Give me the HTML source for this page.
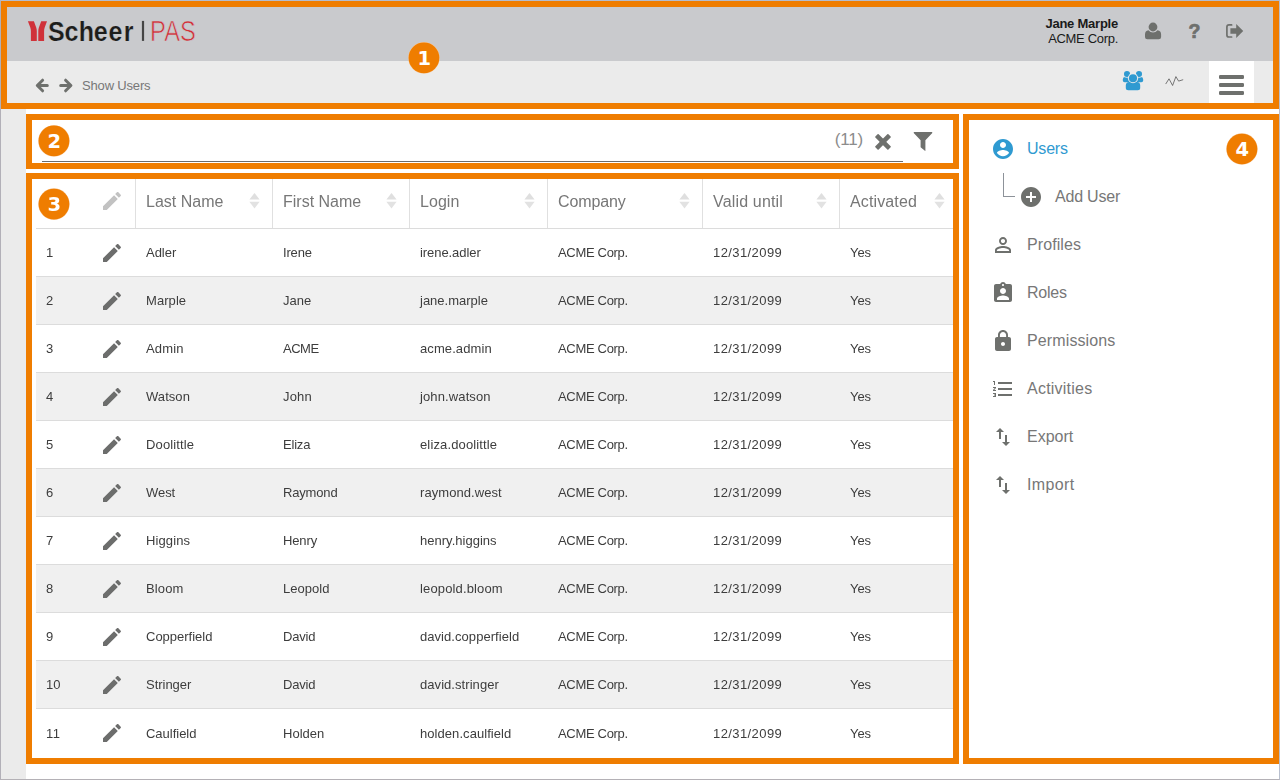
<!DOCTYPE html>
<html lang="en"><head><meta charset="utf-8"><title>Show Users</title>
<style>
html,body{margin:0;padding:0}
body{width:1280px;height:780px;position:relative;overflow:hidden;background:#fff;font-family:"Liberation Sans",sans-serif;color:#444;font-size:13px}
.abs,.abs>*{position:absolute}
.frame{position:absolute;left:0;top:0;width:1278px;height:778px;border:1px solid;border-color:#b5bccc #b8bfce #b4b1b6 #b2b0b8;z-index:50;pointer-events:none}
.topbar{position:absolute;left:1px;top:1px;width:1278px;height:60px;background:#c9cacd}
.navbar{position:absolute;left:1px;top:61px;width:1278px;height:48px;background:#ebebeb}
.gutter{position:absolute;left:1px;top:109px;width:25px;height:670px;background:#ebebeb}
.hl{position:absolute;border:6px solid #ef7d00;box-sizing:border-box;z-index:20;pointer-events:none}
.badge{position:absolute;z-index:30}
.user{position:absolute;right:162px;top:16px;text-align:right;color:#1a1a1a;font-size:13px;line-height:15px;white-space:nowrap}
.user b{display:block;font-weight:700}
.crumb{position:absolute;left:82px;top:77px;font-size:13px;line-height:18px;color:#777;white-space:nowrap}
.menubtn{position:absolute;left:1209px;top:61px;width:45px;height:48px;background:#fff}
.search{position:absolute;left:42px;top:161px;width:861px;height:1px;background:#6b6b6b}
.count{position:absolute;right:417px;top:130px;font-size:17px;line-height:20px;color:#8c8c8c;white-space:nowrap}
.tbl{position:absolute;left:36px;top:179px;width:917px;will-change:transform}
.thead,.tr{display:flex;box-sizing:border-box;width:917px;white-space:nowrap}
.thead{height:50px;border-bottom:1px solid #dcdcdc;font-size:16px;line-height:45px;color:#777}
.tr{height:48px;border-bottom:1px solid #dcdcdc;line-height:47px;color:#3d3d3d}
.tr:nth-child(even){background:#f0f0f0}
.tr:last-child{border-bottom:0;height:49px;line-height:49px}
.c0{width:99px;position:relative;box-sizing:border-box;padding-left:10px}
.c0 svg{position:absolute;left:63.5px}
.tr .c0 svg{top:12px}
.thead .c0 svg{top:10px}
.c{box-sizing:border-box;padding-left:11px;position:relative}
.thead .c{border-left:1px solid #e0e0e0;padding-left:10px}
.w1{width:137px}.w2{width:137px}.w3{width:138px}.w4{width:155px}.w5{width:137px}.w6{width:113px}
.sort{position:absolute;top:14px;right:12px;width:11px;height:16px}
.w6 .sort{right:7px}
.side{position:absolute;left:969px;top:120px;width:304px;height:638px;background:#fff}
.mi{position:absolute;left:57px;font-size:16px;line-height:24px;color:#777;white-space:nowrap}
.mi.on{color:#2f9ad1}
.ic{position:absolute;left:22px;width:24px;height:24px}
</style></head>
<body>
<div class="topbar"></div><div class="navbar"></div><div class="gutter"></div>
<svg style="position:absolute;left:20px;top:10px" width="190" height="44" viewBox="20 10 190 44">
<path fill="#d0323a" d="M27.900 21.200h6l2.300 6.300q.600 1.700.600 3.500v9.900h-5.900v-9.900q0-1.800-.600-3.500z"/>
<path fill="#d0323a" d="M47 21.200h-5.800l-2.300 6.300q-.600 1.700-.600 3.500v9.900h5.800v-9.900q0-1.800.600-3.500z"/>
<text transform="translate(0 40.900) scale(0.9 1)" x="53.33 71.78 87.56 104.22 120.67 137.44" y="0" font-family="Liberation Sans, sans-serif" font-weight="700" font-size="27.800" fill="#1d1d1b" stroke="#c9cacd" stroke-width=".25">Scheer</text>
<rect x="141.900" y="20.900" width="2.200" height="20" fill="#454545"/>
<text x="150.100" y="41.200" font-family="Liberation Sans, sans-serif" font-size="29.200" fill="#d42e37" stroke="#c9cacd" stroke-width=".7" textLength="45.700" lengthAdjust="spacingAndGlyphs">PAS</text>
</svg>
<div class="user"><b><span style="letter-spacing:-0.229px;">Jane Marple</span></b><span style="letter-spacing:-0.312px;">ACME Corp.</span></div>
<svg style="position:absolute;left:1140px;top:18px" width="112" height="26" viewBox="1140 18 112 26">
<g fill="#6e706d">
<circle cx="1153" cy="27" r="4.400"/>
<path d="M1145 37v-2.500q0-3.800 3.500-4.300a5.600 5.600 0 0 0 9 0q3.600.5 3.600 4.300v2.500q0 2.200-2.400 2.200h-11.300q-2.400 0-2.400-2.200z"/>
<path d="M1236.200 24l7 7-7 6.900v-4.100h-5.800v-5.600h5.800z"/>
</g>
<path fill="none" stroke="#6e706d" stroke-width="1.700" stroke-linecap="round" d="M1231.600 24.900h-2.600q-2.100 0-2.100 2.100v7.900q0 2.100 2.100 2.100h2.600"/>
<text x="1188.600" y="38" font-family="Liberation Sans, sans-serif" font-weight="700" font-size="19.500" fill="#6e706d" stroke="#6e706d" stroke-width=".7" stroke-linejoin="round">?</text>
</svg>
<svg style="position:absolute;left:32px;top:74px" width="46" height="24" viewBox="32 74 46 24" fill="none" stroke="#6e706d" stroke-width="3" stroke-linecap="round" stroke-linejoin="round">
<path d="M42.600 80.200l-5.300 5.300 5.300 5.300M37.800 85.500h9.500"/>
<path d="M65.600 80.200l5.300 5.300-5.300 5.300M70.400 85.500h-9.700"/>
</svg>
<div class="crumb"><span style="letter-spacing:-0.164px;">Show Users</span></div>
<svg style="position:absolute;left:1118px;top:66px" width="72" height="30" viewBox="1118 66 72 30">
<g fill="#2f9ad1">
<path d="M1122.800 80.400v-1q0-2.300 2.400-2.300h5.800v5.100h-6.300q-1.900 0-1.900-1.800z"/>
<path d="M1143.200 80.400v-1q0-2.300-2.400-2.300h-5.800v5.100h6.300q1.900 0 1.900-1.800z"/>
<circle cx="1127" cy="74" r="3.700" fill="#ebebeb"/><circle cx="1139" cy="74" r="3.700" fill="#ebebeb"/>
<circle cx="1127" cy="74" r="3.050"/><circle cx="1139" cy="74" r="3.050"/>
<path d="M1125.800 87.700v-2.300q0-3.500 3.500-3.500h7.400q3.500 0 3.500 3.500v2.300q0 2.500-2.500 2.500h-9.400q-2.500 0-2.500-2.500z"/>
<circle cx="1133" cy="78.200" r="5.100" fill="#ebebeb"/>
<circle cx="1133" cy="78.200" r="4.050"/>
</g>
<path fill="none" stroke="#444" stroke-width=".7" stroke-linejoin="round" stroke-linecap="round" d="M1165.900 83.700l3.100-4.900 3.600 6.700 3.300-8.900 2.700 4.500 4.200-1.300"/>
</svg>
<div class="menubtn"><svg style="position:absolute;left:10px;top:14px" width="25" height="20" viewBox="0 0 25 20" fill="#6e706d"><rect x="0" y="0" width="25" height="4" rx="1.300"/><rect x="0" y="8" width="25" height="4" rx="1.300"/><rect x="0" y="16" width="25" height="4" rx="1.300"/></svg></div>
<div class="search"></div>
<div class="count"><span style="letter-spacing:-.2px">(11)</span></div>
<svg style="position:absolute;left:872px;top:130px" width="64" height="24" viewBox="872 130 64 24" fill="#6e706d">
<g transform="translate(883 141.900)"><rect x="-9.250" y="-2.350" width="18.500" height="4.700" rx=".8" transform="rotate(45)"/><rect x="-9.250" y="-2.350" width="18.500" height="4.700" rx=".8" transform="rotate(-45)"/></g>
<path d="M914.100 132.100h17.700q.5 0 .5.500v.4l-6.900 7.300v10.200q0 .6-.5.300l-4-3.200q-.3-.3-.3-.7v-6.600l-6.900-7.300v-.4q0-.5.400-.5z"/>
</svg>
<div class="tbl">
<div class="thead"><div class="c0"><svg width="24" height="24" viewBox="0 0 24 24"><path fill="#c2c2c2" d="M3 17.25V21h3.750L17.810 9.940l-3.750-3.750L3 17.250zM20.710 7.040c.390-.390.390-1.020 0-1.410l-2.340-2.340c-.390-.390-1.020-.390-1.410 0l-1.830 1.830 3.750 3.750 1.830-1.830z"/></svg></div>
<div class="c w1"><span style="letter-spacing:0.005px;">Last Name</span><svg class="sort" viewBox="0 0 11 16"><path fill="#dfdfdf" d="M5.500 0L10.600 6.400H.4z"/><path fill="#e2e2e2" d="M.4 8.700h10.200L5.500 15.400z"/></svg></div>
<div class="c w2"><span style="letter-spacing:0.002px;">First Name</span><svg class="sort" viewBox="0 0 11 16"><path fill="#dfdfdf" d="M5.500 0L10.600 6.400H.4z"/><path fill="#e2e2e2" d="M.4 8.700h10.200L5.500 15.400z"/></svg></div>
<div class="c w3"><span style="letter-spacing:0.059px;">Login</span><svg class="sort" viewBox="0 0 11 16"><path fill="#dfdfdf" d="M5.500 0L10.600 6.400H.4z"/><path fill="#e2e2e2" d="M.4 8.700h10.200L5.500 15.400z"/></svg></div>
<div class="c w4"><span style="letter-spacing:-0.116px;">Company</span><svg class="sort" viewBox="0 0 11 16"><path fill="#dfdfdf" d="M5.500 0L10.600 6.400H.4z"/><path fill="#e2e2e2" d="M.4 8.700h10.200L5.500 15.400z"/></svg></div>
<div class="c w5"><span style="letter-spacing:0.163px;">Valid until</span><svg class="sort" viewBox="0 0 11 16"><path fill="#dfdfdf" d="M5.500 0L10.600 6.400H.4z"/><path fill="#e2e2e2" d="M.4 8.700h10.200L5.500 15.400z"/></svg></div>
<div class="c w6"><span style="letter-spacing:0.134px;">Activated</span><svg class="sort" viewBox="0 0 11 16"><path fill="#dfdfdf" d="M5.500 0L10.600 6.400H.4z"/><path fill="#e2e2e2" d="M.4 8.700h10.200L5.500 15.400z"/></svg></div>
</div><div class="tbody">
<div class="tr"><div class="c0"><span style="letter-spacing:0.078px;">1</span><svg width="24" height="24" viewBox="0 0 24 24"><path fill="#6c6d6c" d="M3 17.25V21h3.750L17.810 9.940l-3.750-3.750L3 17.250zM20.710 7.040c.390-.390.390-1.020 0-1.410l-2.340-2.340c-.390-.390-1.020-.390-1.410 0l-1.830 1.830 3.750 3.750 1.830-1.830z"/></svg></div><div class="c w1"><span style="letter-spacing:-0.016px;">Adler</span></div><div class="c w2"><span style="letter-spacing:-0.169px;">Irene</span></div><div class="c w3"><span style="letter-spacing:-0.067px;">irene.adler</span></div><div class="c w4"><span style="letter-spacing:-0.312px;">ACME Corp.</span></div><div class="c w5"><span style="letter-spacing:0.411px;">12/31/2099</span></div><div class="c w6"><span style="letter-spacing:-0.073px;">Yes</span></div></div>
<div class="tr"><div class="c0"><span style="letter-spacing:0.078px;">2</span><svg width="24" height="24" viewBox="0 0 24 24"><path fill="#6c6d6c" d="M3 17.25V21h3.750L17.810 9.940l-3.750-3.750L3 17.250zM20.710 7.040c.390-.390.390-1.020 0-1.410l-2.340-2.340c-.390-.390-1.020-.390-1.410 0l-1.830 1.830 3.750 3.750 1.830-1.830z"/></svg></div><div class="c w1"><span style="letter-spacing:0.073px;">Marple</span></div><div class="c w2"><span style="letter-spacing:0.031px;">Jane</span></div><div class="c w3"><span style="letter-spacing:-0.001px;">jane.marple</span></div><div class="c w4"><span style="letter-spacing:-0.312px;">ACME Corp.</span></div><div class="c w5"><span style="letter-spacing:0.411px;">12/31/2099</span></div><div class="c w6"><span style="letter-spacing:-0.073px;">Yes</span></div></div>
<div class="tr"><div class="c0"><span style="letter-spacing:0.078px;">3</span><svg width="24" height="24" viewBox="0 0 24 24"><path fill="#6c6d6c" d="M3 17.25V21h3.750L17.810 9.940l-3.750-3.750L3 17.250zM20.710 7.040c.390-.390.390-1.020 0-1.410l-2.340-2.340c-.390-.390-1.020-.390-1.410 0l-1.830 1.830 3.750 3.750 1.830-1.830z"/></svg></div><div class="c w1"><span style="letter-spacing:0.141px;">Admin</span></div><div class="c w2"><span style="letter-spacing:-0.484px;">ACME</span></div><div class="c w3"><span style="letter-spacing:0.094px;">acme.admin</span></div><div class="c w4"><span style="letter-spacing:-0.312px;">ACME Corp.</span></div><div class="c w5"><span style="letter-spacing:0.411px;">12/31/2099</span></div><div class="c w6"><span style="letter-spacing:-0.073px;">Yes</span></div></div>
<div class="tr"><div class="c0"><span style="letter-spacing:0.078px;">4</span><svg width="24" height="24" viewBox="0 0 24 24"><path fill="#6c6d6c" d="M3 17.25V21h3.750L17.810 9.940l-3.750-3.750L3 17.250zM20.710 7.040c.390-.390.390-1.020 0-1.410l-2.340-2.340c-.390-.390-1.020-.390-1.410 0l-1.830 1.830 3.750 3.750 1.830-1.830z"/></svg></div><div class="c w1"><span style="letter-spacing:0.06px;">Watson</span></div><div class="c w2"><span style="letter-spacing:0.184px;">John</span></div><div class="c w3"><span style="letter-spacing:0.118px;">john.watson</span></div><div class="c w4"><span style="letter-spacing:-0.312px;">ACME Corp.</span></div><div class="c w5"><span style="letter-spacing:0.411px;">12/31/2099</span></div><div class="c w6"><span style="letter-spacing:-0.073px;">Yes</span></div></div>
<div class="tr"><div class="c0"><span style="letter-spacing:0.078px;">5</span><svg width="24" height="24" viewBox="0 0 24 24"><path fill="#6c6d6c" d="M3 17.25V21h3.750L17.810 9.940l-3.750-3.750L3 17.250zM20.710 7.040c.390-.390.390-1.020 0-1.410l-2.340-2.340c-.390-.390-1.020-.390-1.410 0l-1.830 1.830 3.750 3.750 1.830-1.830z"/></svg></div><div class="c w1"><span style="letter-spacing:0.142px;">Doolittle</span></div><div class="c w2"><span style="letter-spacing:-0.191px;">Eliza</span></div><div class="c w3"><span style="letter-spacing:0.138px;">eliza.doolittle</span></div><div class="c w4"><span style="letter-spacing:-0.312px;">ACME Corp.</span></div><div class="c w5"><span style="letter-spacing:0.411px;">12/31/2099</span></div><div class="c w6"><span style="letter-spacing:-0.073px;">Yes</span></div></div>
<div class="tr"><div class="c0"><span style="letter-spacing:0.078px;">6</span><svg width="24" height="24" viewBox="0 0 24 24"><path fill="#6c6d6c" d="M3 17.25V21h3.750L17.810 9.940l-3.750-3.750L3 17.250zM20.710 7.040c.390-.390.390-1.020 0-1.410l-2.340-2.340c-.390-.390-1.020-.390-1.410 0l-1.830 1.830 3.750 3.750 1.830-1.830z"/></svg></div><div class="c w1"><span style="letter-spacing:-0.047px;">West</span></div><div class="c w2"><span style="letter-spacing:-0.167px;">Raymond</span></div><div class="c w3"><span style="letter-spacing:0.061px;">raymond.west</span></div><div class="c w4"><span style="letter-spacing:-0.312px;">ACME Corp.</span></div><div class="c w5"><span style="letter-spacing:0.411px;">12/31/2099</span></div><div class="c w6"><span style="letter-spacing:-0.073px;">Yes</span></div></div>
<div class="tr"><div class="c0"><span style="letter-spacing:0.078px;">7</span><svg width="24" height="24" viewBox="0 0 24 24"><path fill="#6c6d6c" d="M3 17.25V21h3.750L17.810 9.940l-3.750-3.750L3 17.250zM20.710 7.040c.390-.390.390-1.020 0-1.410l-2.340-2.340c-.390-.390-1.020-.390-1.410 0l-1.830 1.830 3.750 3.750 1.830-1.830z"/></svg></div><div class="c w1"><span style="letter-spacing:0.105px;">Higgins</span></div><div class="c w2"><span style="letter-spacing:-0.131px;">Henry</span></div><div class="c w3"><span style="letter-spacing:0.019px;">henry.higgins</span></div><div class="c w4"><span style="letter-spacing:-0.312px;">ACME Corp.</span></div><div class="c w5"><span style="letter-spacing:0.411px;">12/31/2099</span></div><div class="c w6"><span style="letter-spacing:-0.073px;">Yes</span></div></div>
<div class="tr"><div class="c0"><span style="letter-spacing:0.078px;">8</span><svg width="24" height="24" viewBox="0 0 24 24"><path fill="#6c6d6c" d="M3 17.25V21h3.750L17.810 9.940l-3.750-3.750L3 17.250zM20.710 7.040c.390-.390.390-1.020 0-1.410l-2.340-2.340c-.390-.390-1.020-.390-1.410 0l-1.830 1.830 3.750 3.750 1.830-1.830z"/></svg></div><div class="c w1"><span style="letter-spacing:0.128px;">Bloom</span></div><div class="c w2"><span style="letter-spacing:0.033px;">Leopold</span></div><div class="c w3"><span style="letter-spacing:0.142px;">leopold.bloom</span></div><div class="c w4"><span style="letter-spacing:-0.312px;">ACME Corp.</span></div><div class="c w5"><span style="letter-spacing:0.411px;">12/31/2099</span></div><div class="c w6"><span style="letter-spacing:-0.073px;">Yes</span></div></div>
<div class="tr"><div class="c0"><span style="letter-spacing:0.078px;">9</span><svg width="24" height="24" viewBox="0 0 24 24"><path fill="#6c6d6c" d="M3 17.25V21h3.750L17.810 9.940l-3.750-3.750L3 17.250zM20.710 7.040c.390-.390.390-1.020 0-1.410l-2.340-2.340c-.390-.390-1.020-.390-1.410 0l-1.830 1.830 3.750 3.750 1.830-1.830z"/></svg></div><div class="c w1"><span style="letter-spacing:-0.011px;">Copperfield</span></div><div class="c w2"><span style="letter-spacing:-0.191px;">David</span></div><div class="c w3"><span style="letter-spacing:0.055px;">david.copperfield</span></div><div class="c w4"><span style="letter-spacing:-0.312px;">ACME Corp.</span></div><div class="c w5"><span style="letter-spacing:0.411px;">12/31/2099</span></div><div class="c w6"><span style="letter-spacing:-0.073px;">Yes</span></div></div>
<div class="tr"><div class="c0"><span style="letter-spacing:0.078px;">10</span><svg width="24" height="24" viewBox="0 0 24 24"><path fill="#6c6d6c" d="M3 17.25V21h3.750L17.810 9.940l-3.750-3.750L3 17.250zM20.710 7.040c.390-.390.390-1.020 0-1.410l-2.340-2.340c-.390-.390-1.020-.390-1.410 0l-1.830 1.830 3.750 3.750 1.830-1.830z"/></svg></div><div class="c w1"><span style="letter-spacing:-0.025px;">Stringer</span></div><div class="c w2"><span style="letter-spacing:-0.191px;">David</span></div><div class="c w3"><span style="letter-spacing:0.057px;">david.stringer</span></div><div class="c w4"><span style="letter-spacing:-0.312px;">ACME Corp.</span></div><div class="c w5"><span style="letter-spacing:0.411px;">12/31/2099</span></div><div class="c w6"><span style="letter-spacing:-0.073px;">Yes</span></div></div>
<div class="tr"><div class="c0"><span style="letter-spacing:0.562px;">11</span><svg width="24" height="24" viewBox="0 0 24 24"><path fill="#6c6d6c" d="M3 17.25V21h3.750L17.810 9.940l-3.750-3.750L3 17.250zM20.710 7.040c.390-.390.390-1.020 0-1.410l-2.340-2.340c-.390-.390-1.020-.390-1.410 0l-1.830 1.830 3.750 3.750 1.830-1.830z"/></svg></div><div class="c w1"><span style="letter-spacing:-0.016px;">Caulfield</span></div><div class="c w2"><span style="letter-spacing:0.01px;">Holden</span></div><div class="c w3"><span style="letter-spacing:0.063px;">holden.caulfield</span></div><div class="c w4"><span style="letter-spacing:-0.312px;">ACME Corp.</span></div><div class="c w5"><span style="letter-spacing:0.411px;">12/31/2099</span></div><div class="c w6"><span style="letter-spacing:-0.073px;">Yes</span></div></div>
</div></div>
<div class="side">
<svg class="ic" style="top:17px;left:22px" viewBox="0 0 24 24"><path fill="#2f9ad1" d="M12 2C6.480 2 2 6.480 2 12s4.480 10 10 10 10-4.480 10-10S17.520 2 12 2zm0 3c1.660 0 3 1.340 3 3s-1.340 3-3 3-3-1.340-3-3 1.340-3 3-3zm0 14.200c-2.500 0-4.710-1.280-6-3.220.030-1.990 4-3.080 6-3.080 1.990 0 5.970 1.090 6 3.080-1.290 1.940-3.500 3.220-6 3.220z"/></svg>
<div class="mi on" style="top:17px;left:58px"><span style="letter-spacing:-0.197px;">Users</span></div>
<svg class="ic" style="top:65px;left:50px" viewBox="0 0 24 24"><path fill="#6e706d" d="M12 2C6.480 2 2 6.480 2 12s4.480 10 10 10 10-4.480 10-10S17.520 2 12 2zm5 11h-4v4h-2v-4H7v-2h4V7h2v4h4v2z"/></svg>
<div class="mi" style="top:65px;left:86px"><span style="letter-spacing:-0.213px;">Add User</span></div>
<svg class="ic" style="top:113px;left:22px" viewBox="0 0 24 24"><path fill="#6e706d" d="M12 5.900c1.160 0 2.100.940 2.100 2.100s-.940 2.100-2.100 2.100S9.900 9.160 9.900 8s.940-2.100 2.100-2.100m0 9c2.970 0 6.100 1.460 6.100 2.100v1.100H5.900V17c0-.640 3.130-2.100 6.100-2.100M12 4C9.790 4 8 5.790 8 8s1.790 4 4 4 4-1.790 4-4-1.790-4-4-4zm0 9c-2.670 0-8 1.340-8 4v3h16v-3c0-2.660-5.330-4-8-4z"/></svg>
<div class="mi" style="top:113px;left:58px"><span style="letter-spacing:0.078px;">Profiles</span></div>
<svg class="ic" style="top:161px;left:22px" viewBox="0 0 24 24"><path fill="#6e706d" d="M19 3h-4.180C14.400 1.840 13.300 1 12 1c-1.300 0-2.400.840-2.820 2H5c-1.100 0-2 .900-2 2v14c0 1.100.900 2 2 2h14c1.100 0 2-.900 2-2V5c0-1.100-.900-2-2-2zm-7 0c.550 0 1 .450 1 1s-.450 1-1 1-1-.450-1-1 .450-1 1-1zm0 4c1.660 0 3 1.340 3 3s-1.340 3-3 3-3-1.340-3-3 1.340-3 3-3zm6 12H6v-1.400c0-2 4-3.100 6-3.100s6 1.100 6 3.100V19z"/></svg>
<div class="mi" style="top:161px;left:58px"><span style="letter-spacing:-0.256px;">Roles</span></div>
<svg class="ic" style="top:209px;left:22px" viewBox="0 0 24 24"><path fill="#6e706d" d="M18 8h-1V6c0-2.760-2.240-5-5-5S7 3.240 7 6v2H6c-1.100 0-2 .900-2 2v10c0 1.100.900 2 2 2h12c1.100 0 2-.900 2-2V10c0-1.100-.900-2-2-2zm-6 9c-1.100 0-2-.900-2-2s.900-2 2-2 2 .900 2 2-.900 2-2 2zm3.100-9H8.900V6c0-1.710 1.390-3.100 3.100-3.100 1.710 0 3.100 1.390 3.100 3.100v2z"/></svg>
<div class="mi" style="top:209px;left:58px"><span style="letter-spacing:0.119px;">Permissions</span></div>
<svg class="ic" style="top:257px;left:22px" viewBox="0 0 24 24"><path fill="#6e706d" d="M2 17h2v.500H3v1h1v.500H2v1h3v-4H2v1zm1-9h1V4H2v1h1v3zm-1 3h1.800L2 13.100v.900h3v-1H3.200L5 10.900V10H2v1zm5-6v2h14V5H7zm0 14h14v-2H7v2zm0-6h14v-2H7v2z"/></svg>
<div class="mi" style="top:257px;left:58px"><span style="letter-spacing:0.233px;">Activities</span></div>
<svg class="ic" style="top:305px;left:22px" viewBox="0 0 24 24"><path fill="#6e706d" d="M9 3L5 6.990h3V14h2V6.990h3L9 3zm7 14.010V10h-2v7.010h-3L15 21l4-3.990h-3z"/></svg>
<div class="mi" style="top:305px;left:58px"><span style="letter-spacing:-0.01px;">Export</span></div>
<svg class="ic" style="top:353px;left:22px" viewBox="0 0 24 24"><path fill="#6e706d" d="M9 3L5 6.990h3V14h2V6.990h3L9 3zm7 14.010V10h-2v7.010h-3L15 21l4-3.990h-3z"/></svg>
<div class="mi" style="top:353px;left:58px"><span style="letter-spacing:0.367px;">Import</span></div>
<div style="position:absolute;left:34px;top:53px;width:11px;height:23px;border-left:1px solid #8d9299;border-bottom:1px solid #8d9299"></div>
</div>
<div class="hl" style="left:1px;top:1px;width:1278px;height:108px"></div>
<div class="hl" style="left:26px;top:114px;width:933px;height:55px"></div>
<div class="hl" style="left:26px;top:173px;width:933px;height:591px"></div>
<div class="hl" style="left:963px;top:114px;width:316px;height:650px"></div>
<svg class="badge" style="left:405px;top:39px" width="36" height="36" viewBox="405 39 36 36"><circle cx="423.95" cy="57.8" r="15.700" fill="#f6c89a"/><circle cx="423.95" cy="57.8" r="15.350" fill="#ef7d00"/><text x="424.40" y="64.90" text-anchor="middle" font-family="DejaVu Sans, sans-serif" font-weight="700" font-size="19.500" fill="#fff">1</text></svg>
<svg class="badge" style="left:35px;top:122px" width="36" height="36" viewBox="35 122 36 36"><circle cx="53.95" cy="140.9" r="15.700" fill="#f6c89a"/><circle cx="53.95" cy="140.9" r="15.350" fill="#ef7d00"/><text x="54.40" y="148.00" text-anchor="middle" font-family="DejaVu Sans, sans-serif" font-weight="700" font-size="19.500" fill="#fff">2</text></svg>
<svg class="badge" style="left:35px;top:186px" width="36" height="36" viewBox="35 186 36 36"><circle cx="53.95" cy="204.05" r="15.700" fill="#f6c89a"/><circle cx="53.95" cy="204.05" r="15.350" fill="#ef7d00"/><text x="54.40" y="211.15" text-anchor="middle" font-family="DejaVu Sans, sans-serif" font-weight="700" font-size="19.500" fill="#fff">3</text></svg>
<svg class="badge" style="left:1223px;top:131px" width="36" height="36" viewBox="1223 131 36 36"><circle cx="1241.95" cy="149.0" r="15.700" fill="#f6c89a"/><circle cx="1241.95" cy="149.0" r="15.350" fill="#ef7d00"/><text x="1242.40" y="156.10" text-anchor="middle" font-family="DejaVu Sans, sans-serif" font-weight="700" font-size="19.500" fill="#fff">4</text></svg>
<div class="frame"></div>
</body></html>
